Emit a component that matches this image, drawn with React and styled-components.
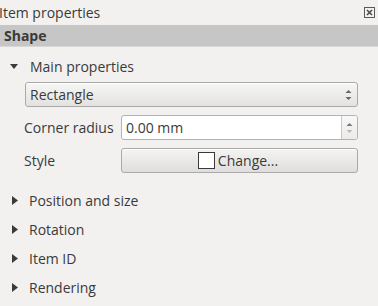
import React from "react";
import styled, { createGlobalStyle } from "styled-components";

const GlobalStyle = createGlobalStyle`
  html, body { margin: 0; padding: 0; background: #f2f1f0; }
  body { font-family: "Open Sans", "DejaVu Sans", sans-serif; color: #3a3a3a; }
`;

const Panel = styled.div`
  width: 378px;
  height: 306px;
  background: #f2f1f0;
  overflow: hidden;
  display: flex;
  flex-direction: column;
  font-size: 14px;
`;

const TitleBar = styled.div`
  height: 25px;
  display: flex;
  align-items: center;
  justify-content: space-between;
  padding-right: 3px;
`;

const Title = styled.span`
  margin-left: -1px;
  font-size: 14px;
`;

const CloseBtn = styled.svg`
  width: 11px;
  height: 11px;
`;

const SectionHeader = styled.div`
  height: 21px;
  background: #c6c6c6;
  border-bottom: 1px solid #d9d8d7;
  display: flex;
  align-items: center;
  padding-left: 4px;
  font-weight: 700;
  font-size: 14px;
  color: #3a3a3a;
`;

const Body = styled.div`
  display: flex;
  flex-direction: column;
  padding-top: 9px;
`;

const GroupHeader = styled.div`
  height: 20px;
  display: flex;
  align-items: center;
  padding-left: ${(p) => p.$indent}px;
  gap: ${(p) => p.$gap}px;
`;

const Collapsed = styled(GroupHeader)`
  height: 29px;
`;

const GroupContent = styled.div`
  display: flex;
  flex-direction: column;
  gap: 8px;
  padding: 6px 20px 0 24px;
`;

const Combo = styled.div`
  margin-left: 1px;
  height: 23px;
  border: 1px solid #a9a9a9;
  border-radius: 3px;
  background: linear-gradient(#f6f6f5, #e3e2e1);
  display: flex;
  align-items: center;
  justify-content: space-between;
  padding: 0 5px 0 4px;
  box-shadow: inset 0 1px 0 #fff;
`;

const FormRow = styled.div`
  display: grid;
  grid-template-columns: 97px 1fr;
  align-items: center;
  height: 25px;
`;

const SpinBox = styled.div`
  height: 23px;
  border: 1px solid #b3b3b3;
  border-radius: 3px;
  background: #fff;
  display: flex;
  overflow: hidden;
`;

const SpinText = styled.div`
  flex: 1;
  display: flex;
  align-items: center;
  padding-left: 4px;
`;

const SpinButtons = styled.div`
  width: 15px;
  border-left: 1px solid #c8c8c8;
  background: linear-gradient(#f8f8f8, #ecebea);
  display: flex;
  align-items: center;
  justify-content: center;
`;

const Button = styled.div`
  height: 23px;
  border: 1px solid #a9a9a9;
  border-radius: 3px;
  background: linear-gradient(#f4f4f3, #dfdedd);
  box-shadow: inset 0 1px 0 #fff;
  display: flex;
  align-items: center;
  justify-content: center;
  gap: 3px;
`;

const Swatch = styled.span`
  width: 15px;
  height: 15px;
  border: 1px solid #3a3a3a;
  background: #fff;
  margin-left: -3px;
`;

const Spacer = styled.div`
  height: 13px;
`;

const DownTri = () => (
  <svg width="8" height="5" viewBox="0 0 8 5">
    <path d="M0 0 H8 L4 5 Z" fill="#3a3a3a" />
  </svg>
);

const RightTri = () => (
  <svg width="6" height="9" viewBox="0 0 6 9">
    <path d="M0 0 L6 4.5 L0 9 Z" fill="#3a3a3a" />
  </svg>
);

const UpDown = ({ color = "#555", faded }) => (
  <svg width="7" height="12" viewBox="0 0 7 12">
    <path d="M0.5 4 L3.5 1 L6.5 4 Z" fill={color} />
    <path d="M0.5 8 L3.5 11 L6.5 8 Z" fill={faded || color} />
  </svg>
);

export default function App() {
  return (
    <>
      <GlobalStyle />
      <Panel>
        <TitleBar>
          <Title>Item properties</Title>
          <CloseBtn viewBox="0 0 11 11">
            <rect x="0.5" y="0.5" width="10" height="10" fill="none" stroke="#5a5a5a" />
            <path d="M3 3 L8 8 M8 3 L3 8" stroke="#4a4a4a" strokeWidth="1.6" />
          </CloseBtn>
        </TitleBar>
        <SectionHeader>Shape</SectionHeader>
        <Body>
          <GroupHeader $indent={10} $gap={12}>
            <DownTri />
            <span>Main properties</span>
          </GroupHeader>
          <GroupContent>
            <Combo>
              <span>Rectangle</span>
              <UpDown color="#666" />
            </Combo>
            <FormRow>
              <span>Corner radius</span>
              <SpinBox>
                <SpinText>0.00 mm</SpinText>
                <SpinButtons>
                  <UpDown color="#777" faded="#bbb" />
                </SpinButtons>
              </SpinBox>
            </FormRow>
            <FormRow>
              <span>Style</span>
              <Button>
                <Swatch />
                <span>Change...</span>
              </Button>
            </FormRow>
          </GroupContent>
          <Spacer />
          <Collapsed $indent={12} $gap={11}>
            <RightTri />
            <span>Position and size</span>
          </Collapsed>
          <Collapsed $indent={12} $gap={11}>
            <RightTri />
            <span>Rotation</span>
          </Collapsed>
          <Collapsed $indent={12} $gap={11}>
            <RightTri />
            <span>Item ID</span>
          </Collapsed>
          <Collapsed $indent={12} $gap={11}>
            <RightTri />
            <span>Rendering</span>
          </Collapsed>
        </Body>
      </Panel>
    </>
  );
}
